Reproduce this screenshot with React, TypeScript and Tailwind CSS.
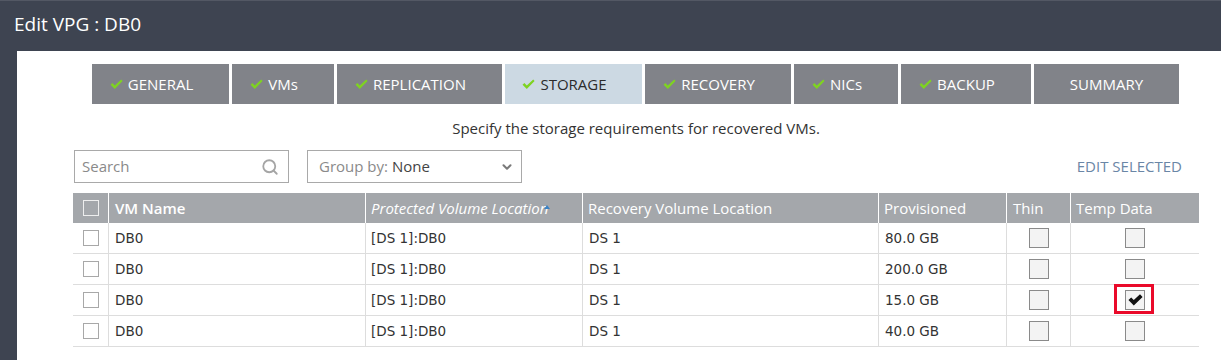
import React from 'react';
import { Search, ChevronDown } from 'lucide-react';

type Tab = { label: string; width: string; done: boolean; active?: boolean };

const TABS: Tab[] = [
  { label: 'GENERAL', width: 'w-[137px]', done: true },
  { label: 'VMs', width: 'w-[102px]', done: true },
  { label: 'REPLICATION', width: 'w-[165px]', done: true },
  { label: 'STORAGE', width: 'w-[137px]', done: true, active: true },
  { label: 'RECOVERY', width: 'w-[146px]', done: true },
  { label: 'NICs', width: 'w-[104px]', done: true },
  { label: 'BACKUP', width: 'w-[130px]', done: true },
  { label: 'SUMMARY', width: 'w-[145px]', done: false },
];

const ROWS = [
  { name: 'DB0', prot: '[DS 1]:DB0', rec: 'DS 1', size: '80.0 GB', temp: false },
  { name: 'DB0', prot: '[DS 1]:DB0', rec: 'DS 1', size: '200.0 GB', temp: false },
  { name: 'DB0', prot: '[DS 1]:DB0', rec: 'DS 1', size: '15.0 GB', temp: true },
  { name: 'DB0', prot: '[DS 1]:DB0', rec: 'DS 1', size: '40.0 GB', temp: false },
];

const openSans = { fontFamily: '"Open Sans", "Liberation Sans", sans-serif' };

function GreenCheck() {
  return (
    <svg width="13" height="11" viewBox="0 0 13 11" className="mr-[5px] shrink-0">
      <path d="M0.5 5.8 L2.4 4.1 L4.8 6.6 L11.2 0.5 L12.6 1.9 L4.8 10 Z" fill="#7ed321" />
    </svg>
  );
}

function BigBox({ checked }: { checked?: boolean }) {
  return (
    <span className="w-[20px] h-[20px] border-[1.5px] border-[#8a8a8a] bg-[#f3f3f3] flex items-center justify-center">
      {checked && (
        <svg width="15" height="12" viewBox="0 0 14 11">
          <path d="M0.4 5.6 L3 3.2 L5.4 5.6 L11.2 0.2 L13.6 2.6 L5.4 10.6 Z" fill="#111" />
        </svg>
      )}
    </span>
  );
}

export default function App() {
  return (
    <div className="w-[1221px] h-[360px] bg-[#3e4451] border-t border-[#535864] flex flex-col overflow-hidden">
      {/* Title bar */}
      <div className="h-[50px] shrink-0 flex items-center pl-[14px] pb-[4px] text-white text-[19px]" style={openSans}>
        Edit VPG : DB0
      </div>

      <div className="flex flex-1">
        <div className="w-[17px] shrink-0" />
        <div className="flex-1 bg-white pl-[56px]">
          <div className="w-[1126px]">
            {/* Wizard tabs */}
            <div className="flex gap-[3px] ml-[19px] mt-[13px]" style={openSans}>
              {TABS.map(t => (
                <div
                  key={t.label}
                  className={`${t.width} h-[40px] flex items-center justify-center text-[15px] ${
                    t.active ? 'bg-[#ccd9e3] text-[#2b2b2b]' : 'bg-[#818389] text-white'
                  } ${t.done ? 'pr-[18px]' : ''}`}
                >
                  {t.done && <GreenCheck />}
                  {t.label}
                </div>
              ))}
            </div>

            <p className="text-center text-[15px] text-[#333] leading-[20px] mt-[14px]" style={openSans}>
              Specify the storage requirements for recovered VMs.
            </p>

            {/* Toolbar */}
            <div className="flex items-center mt-[12px]" style={openSans}>
              <div className="ml-[1px] w-[215px] h-[33px] border border-[#a9a9a9] flex items-center justify-between pl-[7px] pr-[9px]">
                <span className="text-[15px] text-[#8a8a8a]">Search</span>
                <Search size={18} strokeWidth={2.4} className="text-[#a5a5a5]" />
              </div>
              <div className="ml-[18px] w-[215px] h-[33px] border border-[#a9a9a9] flex items-center justify-between pl-[11px] pr-[7px]">
                <span className="text-[15px] text-[#8a8a8a]">
                  Group by: <span className="text-[#444]">None</span>
                </span>
                <ChevronDown size={14} strokeWidth={3.5} className="text-[#7a7a7a]" />
              </div>
              <span className="ml-auto mr-[17px] text-[15px] text-[#6a86a6]">EDIT SELECTED</span>
            </div>

            {/* Table */}
            <div className="mt-[10px]">
              <div className="flex h-[30px] bg-[#a4a7ab] text-white text-[15px]" style={openSans}>
                <div className="w-[36px] flex items-center justify-center border-r border-white">
                  <span className="w-[16px] h-[16px] border-[1.5px] border-[#eeeeee]" />
                </div>
                <div className="w-[257px] flex items-center pl-[6px] border-r border-white font-semibold">VM Name</div>
                <div className="w-[217px] flex items-center pl-[5px] border-r border-white italic relative whitespace-nowrap">
                  Protected Volume Location
                  <span className="absolute left-[178px] top-[12px] w-0 h-0 border-l-[3px] border-r-[3px] border-b-[4px] border-l-transparent border-r-transparent border-b-[#3b82c4]" />
                </div>
                <div className="w-[296px] flex items-center pl-[5px] border-r border-white">Recovery Volume Location</div>
                <div className="w-[128px] flex items-center pl-[5px] border-r border-white">Provisioned</div>
                <div className="w-[64px] flex items-center pl-[6px] border-r border-white">Thin</div>
                <div className="w-[128px] flex items-center pl-[5px]">Temp Data</div>
              </div>

              {ROWS.map((r, i) => (
                <div
                  key={i}
                  className="flex h-[31px] border-b border-[#dddddd] text-[13.5px] text-[#333]"
                  style={{ fontFamily: '"DejaVu Sans", Verdana, sans-serif' }}
                >
                  <div className="w-[36px] flex items-center justify-center border-r border-[#dddddd]">
                    <span className="w-[16px] h-[16px] border border-[#a8a8a8] bg-white" />
                  </div>
                  <div className="w-[257px] flex items-center pl-[6px] border-r border-[#dddddd]">{r.name}</div>
                  <div className="w-[217px] flex items-center pl-[5px] border-r border-[#dddddd]">{r.prot}</div>
                  <div className="w-[296px] flex items-center pl-[6px] border-r border-[#dddddd]">{r.rec}</div>
                  <div className="w-[128px] flex items-center pl-[6px] border-r border-[#dddddd]">{r.size}</div>
                  <div className="w-[64px] flex items-center justify-center border-r border-[#dddddd]">
                    <BigBox />
                  </div>
                  <div className="w-[128px] flex items-center justify-center">
                    <span className="relative flex">
                      <BigBox checked={r.temp} />
                      {r.temp && (
                        <span className="absolute -left-[11px] -top-[6px] w-[40px] h-[30px] border-[3px] border-[#ea0a2a]" />
                      )}
                    </span>
                  </div>
                </div>
              ))}
            </div>
          </div>
        </div>
      </div>
    </div>
  );
}
